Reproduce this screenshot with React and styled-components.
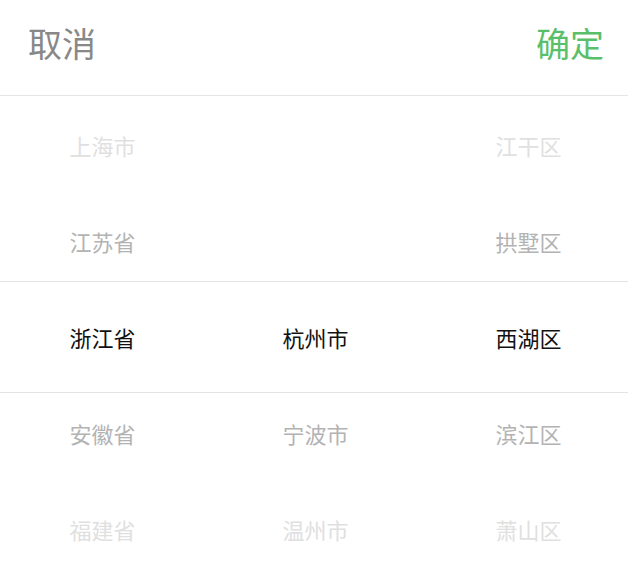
import React from "react";
import styled, { createGlobalStyle } from "styled-components";

const GlobalStyle = createGlobalStyle`
  html, body {
    margin: 0;
    padding: 0;
    background: #fff;
  }
  body {
    font-family: "Noto Sans CJK SC", "Noto Sans", sans-serif;
  }
`;

const Wrapper = styled.div`
  width: 628px;
  height: 568px;
  overflow: hidden;
  background: #fff;
`;

const Toolbar = styled.div`
  display: flex;
  justify-content: space-between;
  align-items: center;
  height: 96px;
  padding: 0 24px 10px 28px;
  box-sizing: border-box;
  border-bottom: 1px solid #e5e5e5;
`;

const Action = styled.div`
  font-size: 34px;
  line-height: 1;
  color: ${({ confirm }) => (confirm ? "#5abf6b" : "#888888")};
  cursor: pointer;
`;

const Body = styled.div`
  position: relative;
  height: 471px;
  overflow: hidden;
`;

const Columns = styled.div`
  display: grid;
  grid-template-columns: repeat(3, 213px);
  margin-left: -4px;
  padding-top: 1px;
`;

const Column = styled.div`
  display: flex;
  flex-direction: column;
`;

const Item = styled.div`
  height: 96px;
  display: flex;
  align-items: center;
  justify-content: center;
  font-size: 22px;
  color: ${({ level }) =>
    level === 0 ? "#111111" : level === 1 ? "#b3b3b3" : "#e0e0e0"};
`;

const Indicator = styled.div`
  position: absolute;
  left: 0;
  right: 0;
  top: 185px;
  height: 110px;
  border-top: 1px solid #e3e3e3;
  border-bottom: 1px solid #e3e3e3;
  pointer-events: none;
`;

const columns = [
  ["上海市", "江苏省", "浙江省", "安徽省", "福建省"],
  ["", "", "杭州市", "宁波市", "温州市"],
  ["江干区", "拱墅区", "西湖区", "滨江区", "萧山区"],
];

const App = () => {
  return (
    <Wrapper>
      <GlobalStyle />
      <Toolbar>
        <Action>取消</Action>
        <Action confirm>确定</Action>
      </Toolbar>
      <Body>
        <Columns>
          {columns.map((col, i) => (
            <Column key={i}>
              {col.map((name, j) => (
                <Item key={j} level={Math.abs(j - 2)}>
                  {name}
                </Item>
              ))}
            </Column>
          ))}
        </Columns>
        <Indicator />
      </Body>
    </Wrapper>
  );
};

export default App;
